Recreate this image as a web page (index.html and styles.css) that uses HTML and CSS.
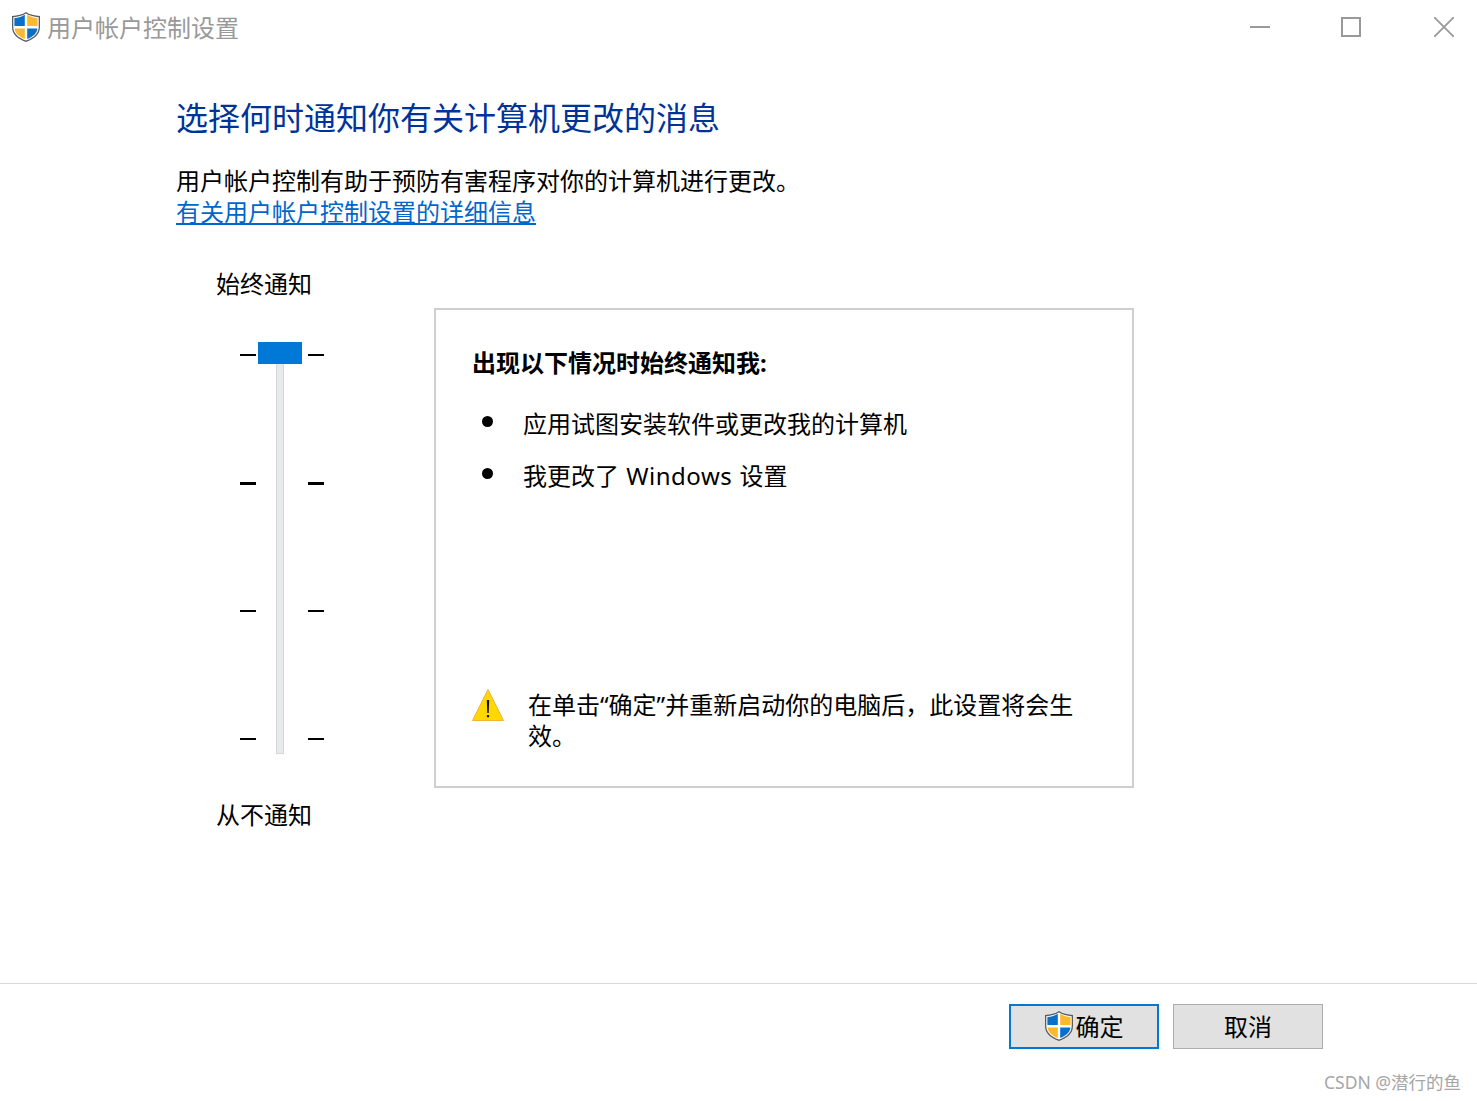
FILE: index.html
```html
<!DOCTYPE html>
<html>
  <head>
    <meta charset="utf-8">
    <title>用户帐户控制设置</title>
    <link rel="stylesheet" href="styles.css">
  </head>
  <body>
    <svg class="defs" width="0" height="0">
      <symbol id="shield" viewBox="0 0 28 30">
        <path d="M14 0C10.500 2.500 5.500 3.800 0 3.900V15c0 7.200 5.200 11.800 14 15C22.800 26.800 28 22.200 28 15V3.900C22.500 3.800 17.500 2.500 14 0z" fill="#5a5c60"/>
        <path d="M14 1.600C10.500 3.800 6 5 1.300 5.200V15c0 6.400 4.800 10.600 12.700 13.600C21.900 25.600 26.700 21.400 26.700 15V5.200C22 5 17.500 3.800 14 1.600z" fill="#fff"/>
        <path d="M12.800 2.700C10 4.400 6.500 5.700 2.400 6V14H12.800z" fill="#0a6fc9"/>
        <path d="M15.200 2.700C18 4.400 21.500 5.700 25.600 6V14H15.200z" fill="#fdb92e"/>
        <path d="M2.500 16.400H12.800V27C7.500 24.800 3.100 21.500 2.500 16.400z" fill="#fdb92e"/>
        <path d="M25.500 16.400H15.200V27C20.500 24.800 24.900 21.500 25.500 16.400z" fill="#0a6fc9"/>
      </symbol>
    </svg>

    <div class="titlebar">
      <div class="title">
        <svg class="title-icon"><use href="#shield"/></svg>
        <span>用户帐户控制设置</span>
      </div>
      <div class="win-buttons">
        <svg width="20" height="20" viewBox="0 0 20 20"><path d="M0 10H20" stroke="#999" stroke-width="2"/></svg>
        <svg class="max-icon" width="20" height="20" viewBox="0 0 20 20"><path d="M1 1H19V19H1z" fill="none" stroke="#999" stroke-width="2"/></svg>
        <svg width="20" height="20" viewBox="0 0 20 20"><path d="M0 0L20 20M20 0L0 20" stroke="#999" stroke-width="1.800"/></svg>
      </div>
    </div>

    <div class="content">
      <h1 class="heading">选择何时通知你有关计算机更改的消息</h1>
      <p class="intro">用户帐户控制有助于预防有害程序对你的计算机进行更改。<br><a href="#" class="link">有关用户帐户控制设置的详细信息</a></p>

      <div class="main">
        <div class="slider-col">
          <div class="slider-label">始终通知</div>
          <div class="slider">
            <div class="ticks">
              <i class="tick"></i><i class="tick thick"></i><i class="tick"></i><i class="tick"></i>
            </div>
            <div class="track"><div class="thumb"></div></div>
            <div class="ticks">
              <i class="tick"></i><i class="tick thick"></i><i class="tick"></i><i class="tick"></i>
            </div>
          </div>
          <div class="slider-label bottom">从不通知</div>
        </div>

        <div class="box">
          <div class="box-title">出现以下情况时始终通知我:</div>
          <ul class="list">
            <li><span>应用试图安装软件或更改我的计算机</span></li>
            <li><span>我更改了 <span class="latin">Windows</span> 设置</span></li>
          </ul>
          <div class="warning">
            <svg class="warn-icon" width="32" height="32" viewBox="0 0 32 32">
              <path d="M16 .5L31.500 31.500H.5z" fill="#ffd800" stroke="#f2b33d" stroke-width="1"/>
              <path d="M14.800 11H17.200L16.700 24H15.300zM14.900 26H17.100V28.200H14.900z" fill="#111"/>
            </svg>
            <p class="warn-text">在单击“确定”并重新启动你的电脑后，此设置将会生效。</p>
          </div>
        </div>
      </div>
    </div>

    <div class="footer">
      <button class="btn primary"><svg class="btn-icon"><use href="#shield"/></svg>确定</button>
      <button class="btn">取消</button>
    </div>
    <div class="watermark">CSDN @潜行的鱼</div>
  </body>
</html>
```

FILE: styles.css
```css
html, body {
  height: 100%;
}
body {
  margin: 0;
  background-color: #fff;
  color: #000;
  font-family: "Noto Sans", "Noto Sans CJK SC", sans-serif;
  font-size: 24px;
  display: flex;
  flex-direction: column;
  overflow: hidden;
  position: relative;
}
.defs {
  position: absolute;
}

/* title bar */
.titlebar {
  height: 56px;
  display: flex;
  justify-content: space-between;
  align-items: center;
  padding: 0 23px 0 12px;
}
.title {
  display: flex;
  align-items: center;
  gap: 7px;
  color: #999;
  line-height: 32px;
}
.title-icon {
  width: 28px;
  height: 30px;
  margin-top: -2px;
}
.win-buttons {
  display: flex;
  gap: 71px;
  margin-top: -2px;
}
.max-icon {
  margin-right: 2px;
}

/* content */
.content {
  flex: 1;
  padding-left: 176px;
}
.heading {
  margin: 22px 0 0;
  font-size: 32px;
  font-weight: normal;
  line-height: 80px;
  height: 80px;
  color: #003399;
}
.intro {
  margin: 7px 0 0;
  line-height: 31px;
}
.link {
  color: #0066cc;
}
.main {
  display: flex;
  margin-top: 41px;
}

/* slider */
.slider-col {
  width: 258px;
  padding-left: 40px;
  box-sizing: border-box;
}
.slider-label {
  line-height: 32px;
}
.slider-label.bottom {
  margin-top: 45px;
}
.slider {
  display: flex;
  margin: 42px 0 0 24px;
  height: 412px;
}
.ticks {
  width: 16px;
  height: 386px;
  margin-top: 12px;
  display: flex;
  flex-direction: column;
  justify-content: space-between;
}
.tick {
  display: block;
  height: 2px;
  background-color: #000;
}
.tick.thick {
  height: 3px;
}
.track {
  width: 8px;
  margin: 0 24px 0 20px;
  box-sizing: border-box;
  background-color: #e7eaea;
  border: 1px solid #d6d6d6;
  border-top: none;
  position: relative;
}
.thumb {
  position: absolute;
  top: 0;
  left: -19px;
  width: 44px;
  height: 22px;
  background-color: #0078d7;
}

/* right box */
.box {
  width: 700px;
  height: 480px;
  margin-top: 40px;
  box-sizing: border-box;
  border: 2px solid #cfcfcf;
  padding: 37px 36px 0;
  display: flex;
  flex-direction: column;
}
.box-title {
  font-weight: bold;
  line-height: 32px;
}
.list {
  list-style: none;
  margin: 29px 0 0;
  padding: 0 0 0 10px;
}
.list li {
  line-height: 32px;
  margin-bottom: 20px;
  display: flex;
  align-items: center;
  gap: 30px;
}
.list li::before {
  content: "";
  width: 11px;
  height: 11px;
  margin-top: -6px;
  border-radius: 50%;
  background-color: #000;
}
.latin {
  letter-spacing: 0.5px;
  margin: 0 1px;
}
.warning {
  display: flex;
  gap: 24px;
  margin-top: auto;
  margin-bottom: 35px;
}
.warn-icon {
  flex: none;
}
.warn-text {
  margin: 0;
  width: 560px;
  line-height: 31px;
}

/* footer */
.footer {
  height: 118px;
  border-top: 1px solid #d9d9d9;
  box-sizing: border-box;
  display: flex;
  justify-content: flex-end;
  gap: 14px;
  padding: 20px 154px 0 0;
}
.btn {
  width: 150px;
  height: 45px;
  box-sizing: border-box;
  background-color: #e1e1e1;
  border: 1px solid #adadad;
  font-family: inherit;
  font-size: 24px;
  line-height: 32px;
  color: #000;
  display: flex;
  align-items: center;
  justify-content: center;
  padding: 0;
}
.btn.primary {
  border: 2px solid #0078d7;
}
.btn-icon {
  width: 28px;
  height: 30px;
  margin: -2px 3px 0 0;
}

.watermark {
  position: absolute;
  right: 16px;
  bottom: 7px;
  font-size: 17.500px;
  line-height: 24px;
  color: #a6a6a6;
}
```
